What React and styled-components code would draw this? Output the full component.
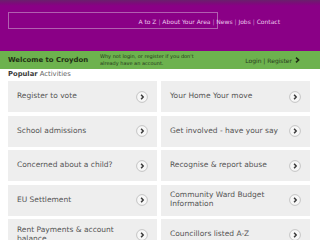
import styled, { createGlobalStyle } from "styled-components";

const GlobalStyle = createGlobalStyle`
  html, body {
    margin: 0;
    padding: 0;
    background: #fff;
    font-family: "DejaVu Sans", Verdana, sans-serif;
  }
`;

const Page = styled.div`
  width: 320px;
  overflow: hidden;
`;

const Masthead = styled.header`
  height: 51px;
  background: linear-gradient(#6a1f6c 0, #80077d 4px, #8a0086 6px, #8a0086 100%);
  position: relative;
  padding: 12px 8px 0;
  box-sizing: border-box;
`;

const SearchBox = styled.div`
  width: 210px;
  height: 17px;
  border: 1px solid #b15fb0;
  box-sizing: border-box;
`;

const TopNav = styled.nav`
  position: absolute;
  top: 17px;
  right: 40px;
  font-size: 6px;
  color: #ecc8ec;
  line-height: 9px;
  white-space: pre;
`;

const Sep = styled.span`
  color: #c98ac9;
`;

const WelcomeBar = styled.div`
  height: 18px;
  background: #6db24e;
  display: flex;
  align-items: center;
  padding: 0 8px;
  color: #1f2f14;
`;

const Welcome = styled.div`
  width: 92px;
  font-weight: bold;
  font-size: 6.9px;
`;

const Prompt = styled.div`
  width: 100px;
  font-size: 5px;
  line-height: 7.4px;
  color: #24361a;
`;

const Account = styled.div`
  margin-left: auto;
  margin-right: 12px;
  font-size: 6px;
  display: flex;
  align-items: center;
  gap: 3px;
  color: #2a3b20;
`;

const SectionTitle = styled.div`
  padding: 1px 8px 0;
  height: 10px;
  font-size: 6.8px;
  line-height: 9px;
  color: #666;
`;

const Strong = styled.b`
  color: #3a3a3a;
`;

const Grid = styled.div`
  display: grid;
  grid-template-columns: 149px 149px;
  column-gap: 4px;
  row-gap: 3.5px;
  padding: 1px 8px 0;
`;

const Tile = styled.a`
  height: 31px;
  background: #eeeeee;
  display: flex;
  align-items: center;
  padding: 0 9px;
  box-sizing: border-box;
  text-decoration: none;
  color: #555;
`;

const TileText = styled.span`
  flex: 1;
  font-size: 7.5px;
  line-height: 8.6px;
  padding-right: 6px;
`;

const Arrow = () => (
  <svg width="12" height="12" viewBox="0 0 12 12">
    <circle cx="6" cy="6" r="5.4" fill="#f7f7f7" stroke="#c4c4c4" strokeWidth="1" />
    <path d="M5.1 3.7 L7.2 6 L5.1 8.3" fill="none" stroke="#3a3a3a" strokeWidth="1.5" />
  </svg>
);

const activities = [
  "Register to vote",
  "Your Home Your move",
  "School admissions",
  "Get involved - have your say",
  "Concerned about a child?",
  "Recognise & report abuse",
  "EU Settlement",
  "Community Ward Budget Information",
  "Rent Payments & account balance",
  "Councillors listed A-Z",
];

export default function App() {
  return (
    <Page>
      <GlobalStyle />
      <Masthead>
        <SearchBox />
        <TopNav>
          A to Z <Sep>|</Sep> About Your Area <Sep>|</Sep> News <Sep>|</Sep> Jobs <Sep>|</Sep> Contact
        </TopNav>
      </Masthead>
      <WelcomeBar>
        <Welcome>Welcome to Croydon</Welcome>
        <Prompt>Why not login, or register if you don't already have an account.</Prompt>
        <Account>
          Login | Register
          <svg width="5" height="6" viewBox="0 0 5 6">
            <path d="M1 0.6 L3.6 3 L1 5.4" fill="none" stroke="#1f2f14" strokeWidth="1.6" />
          </svg>
        </Account>
      </WelcomeBar>
      <SectionTitle>
        <Strong>Popular</Strong> Activities
      </SectionTitle>
      <Grid>
        {activities.map((a) => (
          <Tile key={a} href="#">
            <TileText>{a}</TileText>
            <Arrow />
          </Tile>
        ))}
      </Grid>
    </Page>
  );
}
